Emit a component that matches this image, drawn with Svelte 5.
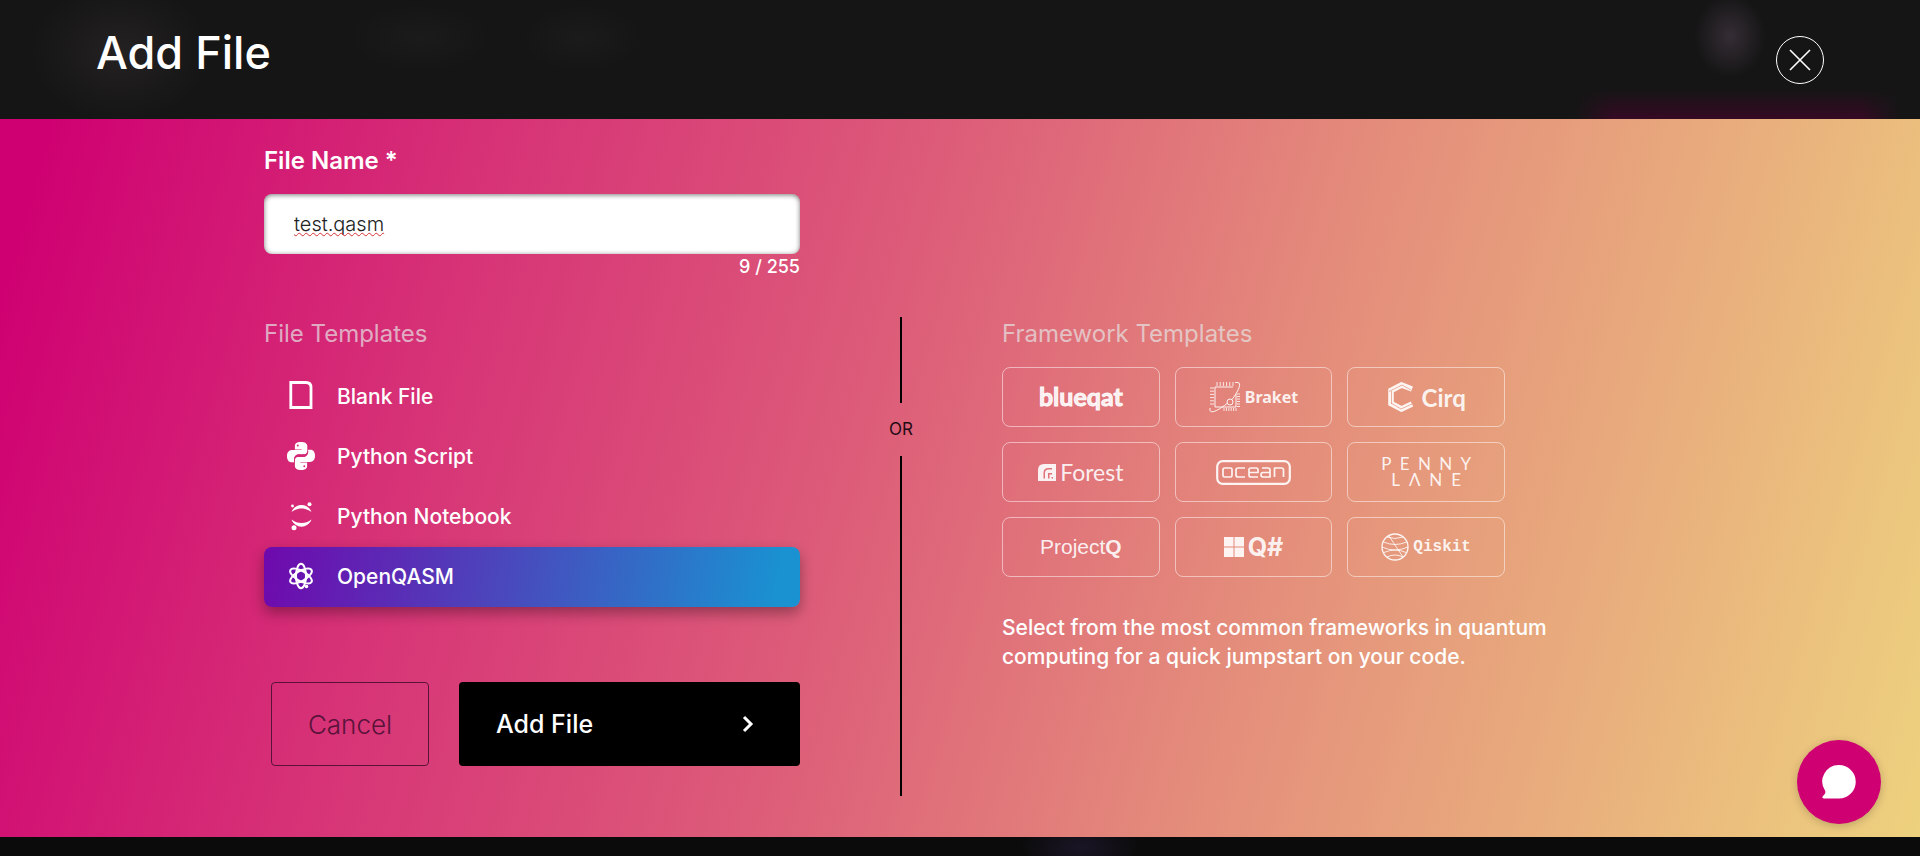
<script>
  let fileName = $state('test.qasm');
  let selected = $state('OpenQASM');

  const maxLength = 255;
  const fileTemplates = ['Blank File', 'Python Script', 'Python Notebook', 'OpenQASM'];
  const frameworks = ['blueqat', 'Braket', 'Cirq', 'Forest', 'ocean', 'PennyLane', 'ProjectQ', 'Q#', 'Qiskit'];
  const pins = [0, 1, 2, 3, 4, 5];
</script>

<div class="modal">
  <header>
    <h1>Add File</h1>
    <button class="close" aria-label="Close">
      <svg width="22" height="22" viewBox="0 0 22 22" fill="none" stroke="currentColor" stroke-width="1.6">
        <path d="M1 1l20 20M21 1L1 21" />
      </svg>
    </button>
  </header>

  <main>
    <form onsubmit={(e) => e.preventDefault()}>
      <div class="field">
        <label for="file-name">File Name *</label>
        <div class="input-wrap">
          <input id="file-name" type="text" maxlength={maxLength} bind:value={fileName} />
          <span class="spell" aria-hidden="true">{fileName}</span>
        </div>
        <span class="counter">{fileName.length} / {maxLength}</span>
      </div>

      <div class="columns">
        <section class="files">
          <h2>File Templates</h2>
          <div class="list">
            {#each fileTemplates as name}
              <button type="button" class="item" class:active={selected === name} onclick={() => (selected = name)}>
                <svg width="30" height="30" viewBox="0 0 30 30" fill="none" stroke="none">
                  {#if name === 'Blank File'}
                    <path d="M4.800 1.500H20q5 0 5 5V26.500H4.800z" stroke="currentColor" stroke-width="2.800" />
                  {:else if name === 'Python Script'}
                    <path fill="currentColor" d="M14.700 1C10.500 1 8.900 2.600 8.900 5v3.400h6.800v.6H6C3 9 1 11.300 1 15.200s1.900 6 4.500 6h2.600v-3c0-2.900 2.200-4.900 4.700-4.900h5.500c1.900 0 3-1.300 3-3.200V5c0-2.500-2.300-4-6.600-4z" />
                    <path fill="currentColor" d="M15.300 29c4.200 0 5.800-1.600 5.800-4v-3.400h-6.800V21H24c3 0 5-2.300 5-6.200s-1.900-6-4.500-6h-2.400v2.700c0 2.700-2.200 4.500-4.700 4.500h-5.500c-1.900 0-3 1.500-3 3.400V25c0 2.500 2.300 4 6.400 4z" />
                    <path class="seam-pink" d="M8.500 21v-2.800c0-2.600 1.800-4.300 4.300-4.300h5.500c2.200 0 3.500-1.500 3.500-3.700" />
                    <circle class="eye" cx="11.800" cy="4.600" r="1" />
                    <circle class="eye" cx="18.300" cy="25.200" r="1" />
                  {:else if name === 'Python Notebook'}
                    <path fill="currentColor" d="M5.500 11C9 1.800 22 1.800 25.500 11 19.500 6.300 11.500 6.300 5.500 11zM5.500 18.500C9 28 22 28 25.500 18.500 19.500 23.300 11.500 23.300 5.500 18.500z" />
                    <circle fill="currentColor" cx="23.500" cy="3.200" r="2" />
                    <circle fill="currentColor" cx="6.500" cy="5" r="1.400" />
                    <circle fill="currentColor" cx="8" cy="26.800" r="2.500" />
                  {:else}
                    <g stroke="currentColor" stroke-width="2">
                      <ellipse cx="15" cy="15" rx="5" ry="12.200" />
                      <ellipse cx="15" cy="15" rx="5" ry="12.200" transform="rotate(60 15 15)" />
                      <ellipse cx="15" cy="15" rx="5" ry="12.200" transform="rotate(120 15 15)" />
                    </g>
                    <circle cx="15" cy="15" r="6" stroke="currentColor" stroke-width="1.500" />
                    <circle fill="currentColor" cx="20.500" cy="25.500" r="1.800" />
                  {/if}
                </svg>
                <span>{name}</span>
              </button>
            {/each}
          </div>
          <div class="actions">
            <button type="button" class="cancel">Cancel</button>
            <button type="submit" class="submit">
              <span>Add File</span>
              <svg width="12" height="18" viewBox="0 0 12 18" fill="none" stroke="currentColor" stroke-width="3">
                <path d="M2 2l7 7-7 7" />
              </svg>
            </button>
          </div>
        </section>

        <div class="divider"><span>OR</span></div>

        <section class="frameworks">
          <h2>Framework Templates</h2>
          <div class="grid">
            {#each frameworks as name}
              <button type="button" class="card" aria-label={name}>
                {#if name === 'blueqat'}
                  <span class="blueqat">blueqat</span>
                {:else if name === 'Braket'}
                  <svg width="32" height="32" viewBox="0 0 32 32" fill="none" stroke="currentColor">
                    <path d="M27 13v13H6V6h18" />
                    {#each pins as i}
                      <path d="M{8 + i * 3.2} 5V1M{15 + i * 2.4} 27v3M5 {7 + i * 3.2}H1M28 {13 + i * 2.5}h3" stroke-width=".9" />
                    {/each}
                    <circle cx="21" cy="21" r="3" />
                    <path d="M23 18.500C29 11 33 2 29 1.500h-3M18 22.500C10 29 2 33 1 29.500v-2.500" />
                  </svg>
                  <span class="braket">Braket</span>
                {:else if name === 'Cirq'}
                  <svg width="27" height="30" viewBox="0 0 27 30" fill="none" stroke="currentColor">
                    <path d="M25 7L14.500 3 4 8.500v13L14.500 27 25 22" stroke-width="5.600" />
                    <path class="seam" d="M2 9.500l13-6.500 9 5M4.500 9v13M4 21l10 6 11-5" />
                  </svg>
                  <span class="cirq">Cirq</span>
                {:else if name === 'Forest'}
                  <svg width="18" height="17" viewBox="0 0 18 17">
                    <path fill="currentColor" fill-rule="evenodd" d="M6 0h12v17H0V6Q0 0 6 0zM5.500 14.500V9q0-5 5-5H14v1.500h-3.500Q7 5.500 7 9v5.500zM10 14.500V9h4v1.500h-2.500v4zM13.500 13H15v1.500h-1.500z" />
                  </svg>
                  <span class="forest">Forest</span>
                {:else if name === 'ocean'}
                  <svg width="75" height="25" viewBox="0 0 75 25" fill="none" stroke="currentColor" stroke-linejoin="round">
                    <rect x="1.200" y="1.200" width="72.600" height="22.600" rx="5.500" stroke-width="2.200" />
                    <g stroke-width="1.700">
                      <rect x="7" y="8" width="9" height="9" rx="1.500" />
                      <path d="M29 8h-7q-2 0-2 2v5q0 2 2 2h7" />
                      <path d="M33 12.500h9V10q0-2-2-2h-5q-2 0-2 2v5q0 2 2 2h7" />
                      <path d="M46 8h6q2 0 2 2v7h-7q-2 0-2-2.200t2-2.300h7" />
                      <path d="M58.500 17V8h7q2 0 2 2v7" />
                    </g>
                  </svg>
                {:else if name === 'PennyLane'}
                  <span class="penny">
                    <span><i>P</i><i>E</i><i>N</i><i>N</i><i>Y</i></span>
                    <span class="lane"><i>L</i><i>Λ</i><i>N</i><i>E</i></span>
                  </span>
                {:else if name === 'ProjectQ'}
                  <span class="project">Project<b>Q</b></span>
                {:else if name === 'Q#'}
                  <svg width="20" height="20" viewBox="0 0 20 20" fill="currentColor">
                    <path d="M0 0h9.500v9.500H0zM10.500 0H20v9.500h-9.500zM0 10.500h9.500V20H0zM10.500 10.500H20V20h-9.500z" />
                  </svg>
                  <span class="qsharp">Q#</span>
                {:else}
                  <svg width="28" height="28" viewBox="0 0 28 28" fill="none" stroke="currentColor">
                    <circle cx="14" cy="14" r="13" stroke-width="1.300" />
                    <path d="M2.500 9q11.500 5 23 0M1 14q13 6 26 0M3 19.500q11-5 22 0M6 24q8-4 16 0M6 4q8 3 16 0M8 3l14 21" stroke-width=".9" />
                  </svg>
                  <span class="qiskit">Qiskit</span>
                {/if}
              </button>
            {/each}
          </div>
          <p>Select from the most common frameworks in quantum computing for a quick jumpstart on your code.</p>
        </section>
      </div>
    </form>
  </main>

  <footer></footer>
  <button class="chat" aria-label="Open chat">
    <svg width="34" height="34" viewBox="0 0 34 34" fill="currentColor">
      <path d="M17 0a16.500 16.500 0 0 1 0 33.500H2c-2 0-2-1.500-1-2.500 2-2 3-3.500 2-5.500A16.500 16.500 0 0 1 17 0z" />
    </svg>
  </button>
</div>

<style>
  :global(body) { margin: 0; background: #0d0d0d; }
  .modal { min-height: 100vh; display: flex; flex-direction: column; color: #fff; font-family: Inter, sans-serif; }
  button { font: inherit; color: inherit; cursor: pointer; border: 0; background: none; padding: 0; }
  svg { display: block; flex: none; }

  header {
    display: flex; justify-content: space-between; align-items: center; box-sizing: border-box; height: 119px; padding: 0 96px;
    background:
      radial-gradient(ellipse 36px 42px at 1730px 36px, #352d35, transparent),
      radial-gradient(ellipse 90px 70px at 120px 52px, #242122, transparent),
      radial-gradient(ellipse 70px 34px at 420px 38px, #1c1b1b, transparent),
      radial-gradient(ellipse 60px 34px at 582px 38px, #1c1b1b, transparent),
      linear-gradient(90deg, #151515 82%, transparent 84%, transparent 97%, #151515 99%),
      linear-gradient(#151515 75%, #360a24);
  }
  h1 { margin: 0 0 14px; font-size: 45px; line-height: 54px; font-weight: 500; }
  .close { display: flex; align-items: center; justify-content: center; box-sizing: border-box; width: 48px; height: 48px; border: 1px solid #fff; border-radius: 50%; }

  main { flex: 1; background: linear-gradient(106deg, #cf0072 2%, #d62f76 22%, #dd5f79 46%, #e48c7b 65%, #e9b17d 84%, #edd17e 100%); }
  form { padding: 27px 264px 39px; }
  .field { display: flex; flex-direction: column; width: 536px; }
  label { font-size: 24px; line-height: 30px; font-weight: 600; margin-bottom: 18px; }
  .input-wrap { position: relative; display: flex; }
  input { width: 100%; height: 60px; box-sizing: border-box; padding: 0 30px; border: 0; border-radius: 8px; outline: 0; background: #fff; box-shadow: inset 0 1px 5px #0008; color: #222; font: 300 20px Inter, sans-serif; }
  .spell { position: absolute; left: 30px; top: 18px; font-size: 20px; line-height: 24px; font-weight: 300; color: transparent; pointer-events: none; text-decoration: underline wavy #d3302f 1px; text-decoration-skip-ink: none; }
  .counter { align-self: flex-end; font-size: 18px; line-height: 26px; font-weight: 500; }

  .columns { display: flex; align-items: stretch; margin-top: 37px; }
  .files { width: 536px; }
  h2 { margin: 0; padding: 1px 0 17px; font-size: 24px; line-height: 32px; font-weight: 400; color: #e6e6e6b3; }
  .list { display: flex; flex-direction: column; }
  .item { display: flex; align-items: center; gap: 21px; box-sizing: border-box; height: 60px; padding: 0 22px 2px; border-radius: 8px; font-size: 21px; font-weight: 500; }
  .item.active { background: linear-gradient(100deg, #6f09ad, #4a48bc 45%, #1a91d1 95%); box-shadow: 0 6px 14px #0005; }
  .eye { fill: #d52977; }
  .seam-pink { stroke: #d52977; stroke-width: .8; }

  .actions { display: flex; gap: 30px; margin: 75px 0 30px 7px; }
  .actions button { box-sizing: border-box; height: 84px; border-radius: 4px; font-size: 26px; }
  .actions .cancel { width: 158px; border: 1px solid #5a1239; color: #59123a; font-weight: 300; }
  .actions .submit { flex: 1; display: flex; align-items: center; justify-content: space-between; padding: 0 46px 0 37px; background: #000; font-size: 25px; font-weight: 500; }

  .divider { display: flex; flex-direction: column; align-items: center; width: 40px; margin: 0 81px; color: #220b14; font-size: 17px; line-height: 25px; }
  .divider::before, .divider::after { content: ''; width: 2px; background: #000; }
  .divider::before { height: 86px; }
  .divider::after { flex: 1; }
  .divider span { padding: 14px 0; }

  .frameworks { width: 564px; }
  .grid { display: grid; grid-template-columns: repeat(3, 1fr); gap: 15px; width: 503px; }
  .card { display: flex; align-items: center; justify-content: center; box-sizing: border-box; height: 60px; border: 1px solid #ffffff80; border-radius: 8px; color: #ffffffe6; }
  .blueqat { margin-bottom: 3px; font: 700 25px Lato, sans-serif; -webkit-text-stroke: 1px currentColor; }
  .braket { margin-left: 4px; font: 700 16px "Noto Sans", sans-serif; }
  .cirq { margin-left: 8px; font: 700 24px Lato, sans-serif; }
  .seam { stroke: #e5927b; stroke-width: 1; opacity: .7; }
  .forest { margin-left: 4px; font: 400 23px Lato, sans-serif; }
  .penny { display: flex; flex-direction: column; width: 90px; font: 400 17px/16px Lato, sans-serif; }
  .penny span { display: flex; justify-content: space-between; }
  .penny i { font-style: normal; }
  .penny .lane { padding: 0 10px; }
  .project { font: 400 21px "Liberation Sans", sans-serif; }
  .qsharp { margin-left: 4px; font: 700 25px Inter, sans-serif; }
  .qiskit { margin-left: 4px; font: 700 16px "Liberation Mono", monospace; }
  p { margin: 36px 0 0; font-size: 21px; line-height: 29px; font-weight: 500; }

  footer { height: 19px; background: radial-gradient(ellipse 60px 30px at 1080px 10px, #1a1526, transparent), #0b0b0b; }
  .chat { position: fixed; right: 39px; bottom: 32px; display: flex; align-items: center; justify-content: center; width: 84px; height: 84px; border-radius: 50%; background: #cf0072; box-shadow: 0 2px 8px #0003; }
</style>
